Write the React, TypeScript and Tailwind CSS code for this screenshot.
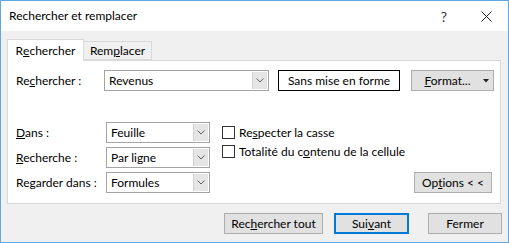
import React from "react";

// Petite flèche des listes déroulantes
const Chevron = () => (
  <svg width="8" height="5" viewBox="0 0 8 5" fill="none">
    <path d="M0.5 0.5 L4 4 L7.5 0.5" stroke="#5f5f5f" strokeWidth="1" />
  </svg>
);

const Combo = ({ value, width }: { value: string; width: string }) => (
  <div
    className={`flex h-[21px] ${width} items-stretch border border-[#a4a4a4] bg-white`}
  >
    <div className="flex flex-1 items-center pl-[4px] text-[12px] text-black">
      {value}
    </div>
    <div className="m-[1px] flex w-[15px] items-center justify-center border-l border-[#d0d0d0] bg-[#e5e5e5]">
      <Chevron />
    </div>
  </div>
);

const Button = ({
  children,
  className = "",
}: {
  children: React.ReactNode;
  className?: string;
}) => (
  <div
    className={`flex h-[21px] items-center justify-center whitespace-nowrap border border-[#adadad] bg-[#e1e1e1] text-[12px] text-black ${className}`}
  >
    {children}
  </div>
);

const Check = ({ children }: { children: React.ReactNode }) => (
  <div className="flex h-[19px] items-center gap-[4px] whitespace-nowrap">
    <div className="h-[13px] w-[13px] border border-[#333333] bg-white" />
    <span className="text-[12px] text-black">{children}</span>
  </div>
);

export default function App() {
  return (
    <div
      className="flex h-[243px] w-[509px] flex-col border border-[#62a7dd] bg-[#f0f0f0] text-black"
      style={{ fontFamily: 'Lato, "Noto Sans", sans-serif' }}
    >
      {/* barre de titre */}
      <div className="flex h-[30px] items-center bg-white pl-[8px] text-[12px]">
        <span className="flex-1">Rechercher et remplacer</span>
        <span className="mr-[34px] text-[14px] text-[#333]">?</span>
        <svg width="11" height="11" viewBox="0 0 11 11" className="mr-[16px]">
          <path d="M0.5 0.5 L10.5 10.5 M10.5 0.5 L0.5 10.5" stroke="#222" strokeWidth="1" />
        </svg>
      </div>

      <div className="flex flex-col px-[6px] pt-[7px]">
        {/* onglets */}
        <div className="flex h-[22px] items-end">
          <div className="relative z-10 -mb-[1px] flex h-[22px] w-[77px] items-center justify-center border border-b-0 border-[#d9d9d9] bg-white text-[12px]">
            R<u>e</u>chercher
          </div>
          <div className="flex h-[19px] w-[68px] items-center justify-center border border-l-0 border-[#d9d9d9] bg-[#f0f0f0] text-[12px]">
            Rem<u>p</u>lacer
          </div>
        </div>

        {/* panneau */}
        <div className="flex h-[144px] w-[494px] flex-col border border-[#d9d9d9] bg-white pl-[8px] pt-[9px]">
          <div className="flex items-center">
            <span className="w-[88px] whitespace-nowrap text-[12px]">
              Re<u>c</u>hercher :
            </span>
            <Combo value="Revenus" width="w-[165px]" />
            <div className="ml-[9px] flex h-[21px] w-[122px] items-center justify-center whitespace-nowrap border border-black bg-white text-[12px]">
              Sans mise en forme
            </div>
            <Button className="ml-[11px] w-[83px] gap-[12px] pl-[8px]">
              <span>
                <u>F</u>ormat...
              </span>
              <svg width="6" height="4" viewBox="0 0 6 4">
                <path d="M0 0 L6 0 L3 3.5 Z" fill="#222" />
              </svg>
            </Button>
          </div>

          <div className="mt-[31px] flex">
            <div className="flex flex-col gap-[4px]">
              {[
                [<><u>D</u>ans :</>, "Feuille"],
                [<><u>R</u>echerche :</>, "Par ligne"],
                [<>Re<u>g</u>arder dans :</>, "Formules"],
              ].map(([label, value], i) => (
                <div key={i} className="flex items-center">
                  <span className="w-[90px] whitespace-nowrap text-[12px]">{label}</span>
                  <Combo value={value as string} width="w-[104px]" />
                </div>
              ))}
            </div>
            <div className="ml-[12px] flex flex-col pt-[1px]">
              <Check>
                Re<u>s</u>pecter la casse
              </Check>
              <Check>
                Totalité du c<u>o</u>ntenu de la cellule
              </Check>
            </div>
            <div className="ml-auto mr-[8px] flex items-end">
              <Button className="w-[78px]">
                Op<u>t</u>ions &lt; &lt;
              </Button>
            </div>
          </div>
        </div>

        {/* boutons du bas */}
        <div className="mt-[9px] flex justify-end">
          <Button className="w-[99px]">
            Rec<u>h</u>ercher tout
          </Button>
          <div className="ml-[11px] flex h-[21px] w-[75px] items-center justify-center border-2 border-[#0078d7] bg-[#e1e1e1] text-[12px]">
            Sui<u>v</u>ant
          </div>
          <Button className="ml-[19px] w-[74px]">Fermer</Button>
        </div>
      </div>
    </div>
  );
}
